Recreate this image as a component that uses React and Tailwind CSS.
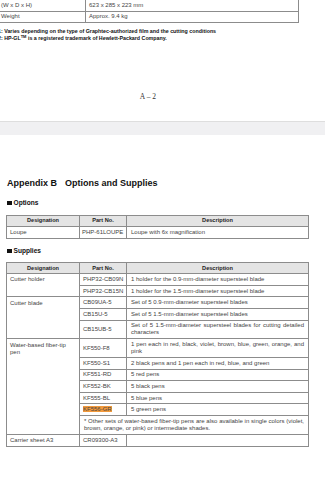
const supplies = [
  { d: 'Cutter holder', span: 2, p: 'PHP32-CB09N', t: '1 holder for the 0.9-mm-diameter supersteel blade' },
  { p: 'PHP32-CB15N', t: '1 holder for the 1.5-mm-diameter supersteel blade' },
  { d: 'Cutter blade', span: 3, p: 'CB09UA-5', t: 'Set of 5 0.9-mm-diameter supersteel blades' },
  { p: 'CB15U-5', t: 'Set of 5 1.5-mm-diameter supersteel blades' },
  { p: 'CB15UB-5', t: 'Set of 5 1.5-mm-diameter supersteel blades for cutting detailed characters', tall: true },
  { d: 'Water-based fiber-tip pen', span: 7, p: 'KF550-F8', t: '1 pen each in red, black, violet, brown, blue, green, orange, and pink', tall: true },
  { p: 'KF550-S1', t: '2 black pens and 1 pen each in red, blue, and green' },
  { p: 'KF551-RD', t: '5 red pens' },
  { p: 'KF552-BK', t: '5 black pens' },
  { p: 'KF555-BL', t: '5 blue pens' },
  { p: 'KF556-GR', t: '5 green pens', mark: true },
  { note: '* Other sets of water-based fiber-tip pens are also available in single colors (violet, brown, orange, or pink) or intermediate shades.', tall: true },
  { d: 'Carrier sheet A3', span: 1, p: 'CR09300-A3', t: '' },
];

function Heading({ children, className }) {
  return (
    <div className={`flex items-center gap-[2px] text-[6.6px] font-bold leading-[8px] text-[#111] ${className}`}>
      <span className="inline-block h-[4.5px] w-[4.5px] bg-[#111]" />
      {children}
    </div>
  );
}

function Cols() {
  return (
    <colgroup>
      <col className="w-[73px]" />
      <col className="w-[47px]" />
      <col className="w-[182px]" />
    </colgroup>
  );
}

function HeadRow() {
  return (
    <tr className="h-[11px] bg-[#e4e4e4] text-[5.6px] font-bold text-[#222]">
      <th className="border border-[#8c8c8c] p-0 text-center">Designation</th>
      <th className="border border-[#8c8c8c] p-0 text-center">Part No.</th>
      <th className="border border-[#8c8c8c] p-0 text-center">Description</th>
    </tr>
  );
}

export default function App() {
  const cell = 'border border-[#8c8c8c] py-0 align-middle';
  return (
    <div className="flex h-[500px] w-[325px] flex-col overflow-hidden bg-white font-['Liberation_Sans',Arial,sans-serif] text-[#444]">
      <div className="h-[121px] shrink-0 overflow-hidden bg-white">
        <table className="-mt-[1px] -ml-[3px] table-fixed border-collapse text-[6px] leading-[7px]">
          <colgroup>
            <col className="w-[88px]" />
            <col className="w-[213px]" />
          </colgroup>
          <tbody>
            <tr className="h-[11.5px]">
              <td className="border border-[#8c8c8c] py-0 pl-[3px]">(W x D x H)</td>
              <td className="border border-[#8c8c8c] py-0 pl-[3px]">623 x 285 x 223 mm</td>
            </tr>
            <tr className="h-[11px]">
              <td className="border border-[#8c8c8c] py-0 pl-[3px]">Weight</td>
              <td className="border border-[#8c8c8c] py-0 pl-[3px]">Approx. 9.4 kg</td>
            </tr>
          </tbody>
        </table>
        <div className="-ml-[2px] mt-[5.5px] text-[5.3px] font-bold leading-[7px] text-[#111]">
          <div>1: Varies depending on the type of Graphtec-authorized film and the cutting conditions</div>
          <div>
            2: HP-GL<sup className="text-[4px]">TM</sup> is a registered trademark of Hewlett-Packard Company.
          </div>
        </div>
        <div className="mt-[49px] w-[296px] text-center font-['Liberation_Serif',serif] text-[7.5px] text-[#333]">
          A – 2
        </div>
      </div>
      <div className="h-[14px] shrink-0 border-t border-[#dedede] bg-[#f0f0f2]" />
      <div className="flex-1 bg-white pl-[6px]">
        <div className="mt-[42.5px] ml-[1px] flex gap-[8px] text-[9px] font-bold leading-[11px] text-[#111]">
          <span>Appendix B</span>
          <span>Options and Supplies</span>
        </div>
        <Heading className="mt-[10.5px] ml-[1px]">Options</Heading>
        <table className="mt-[7.7px] w-[302px] table-fixed border-collapse text-[6px] leading-[7px]">
          <Cols />
          <tbody>
            <HeadRow />
            <tr className="h-[12.5px]">
              <td className={`${cell} pl-[3px]`}>Loupe</td>
              <td className={`${cell} pl-[2px]`}>PHP-61LOUPE</td>
              <td className={`${cell} pl-[4px]`}>Loupe with 6x magnification</td>
            </tr>
          </tbody>
        </table>
        <Heading className="mt-[8px] ml-[1px]">Supplies</Heading>
        <table className="mt-[7px] w-[302px] table-fixed border-collapse text-[6px] leading-[7px]">
          <Cols />
          <tbody>
            <HeadRow />
            {supplies.map((r, i) => (
              <tr key={i} className={r.tall ? 'h-[18.7px]' : 'h-[11.6px]'}>
                {r.d && (
                  <td rowSpan={r.span} className="border border-[#8c8c8c] py-[2.3px] pl-[3px] pr-[8px] align-top">
                    {r.d}
                  </td>
                )}
                {r.note ? (
                  <td colSpan={2} className={`${cell} px-[4px] text-justify`}>
                    {r.note}
                  </td>
                ) : (
                  <>
                    <td className={`${cell} pl-[3px] pr-0`}>
                      {r.mark ? <span className="bg-[#f39a3c]">{r.p}</span> : r.p}
                    </td>
                    <td className={`${cell} px-[4px] text-justify`}>{r.t}</td>
                  </>
                )}
              </tr>
            ))}
          </tbody>
        </table>
      </div>
    </div>
  );
}
